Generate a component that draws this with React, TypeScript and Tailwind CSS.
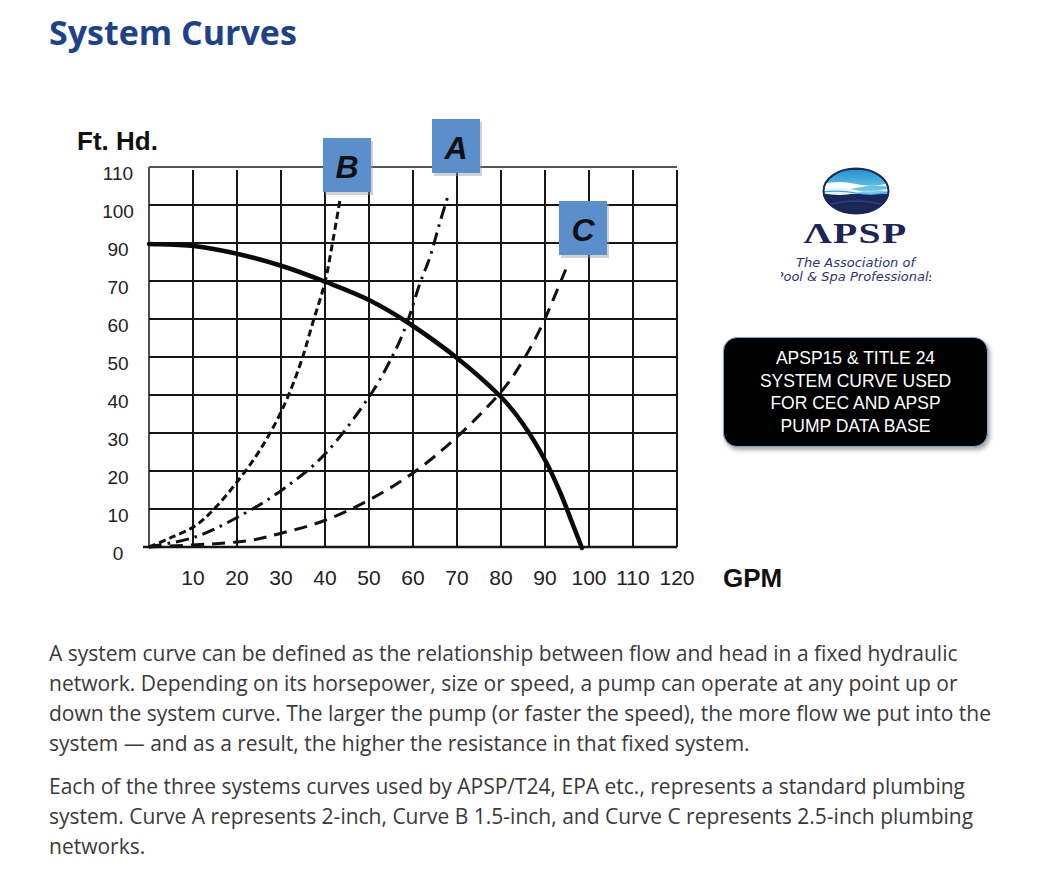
import React from "react";

type Pt = [number, number];

// grid in page coordinates (the svg viewBox is offset to match)
const GRID_X = Array.from({ length: 13 }, (_, i) => 149 + i * 44);
const GRID_Y = Array.from({ length: 11 }, (_, j) => 167 + j * 38);
const Y_LABELS = ["110", "100", "90", "70", "60", "50", "40", "30", "20", "10", "0"];
const X_LABELS = ["10", "20", "30", "40", "50", "60", "70", "80", "90", "100", "110", "120"];

const PUMP: Pt[] = [
	[149, 244], [194, 246], [238, 254], [282, 266], [326, 282], [369, 300],
	[410, 324], [457, 358], [500, 396], [523, 424], [545, 460], [560, 492],
	[573, 525], [582, 548],
];
const CURVE_B: Pt[] = [
	[149, 547], [170, 538], [195, 526], [215, 508], [237, 482], [260, 450],
	[282, 410], [300, 365], [313, 322], [325, 282], [333, 240], [340, 200],
];
const CURVE_A: Pt[] = [
	[149, 547], [195, 537], [238, 517], [282, 490], [326, 453], [369, 397],
	[393, 355], [407, 323], [420, 283], [430, 257], [440, 222], [448, 196],
];
const CURVE_C: Pt[] = [
	[149, 547], [237, 542], [282, 533], [326, 520], [369, 500], [413, 473],
	[457, 437], [500, 393], [522, 362], [543, 323], [568, 264],
];

// catmull-rom -> cubic bezier
function smooth(pts: Pt[]) {
	let d = `M${pts[0][0]} ${pts[0][1]}`;
	for (let i = 0; i < pts.length - 1; i++) {
		const p0 = pts[i - 1] || pts[i];
		const p1 = pts[i];
		const p2 = pts[i + 1];
		const p3 = pts[i + 2] || p2;
		const c1x = p1[0] + (p2[0] - p0[0]) / 6;
		const c1y = p1[1] + (p2[1] - p0[1]) / 6;
		const c2x = p2[0] - (p3[0] - p1[0]) / 6;
		const c2y = p2[1] - (p3[1] - p1[1]) / 6;
		d += ` C${c1x} ${c1y} ${c2x} ${c2y} ${p2[0]} ${p2[1]}`;
	}
	return d;
}

function CurveTag({ x, y, letter }: { x: number; y: number; letter: string }) {
	return (
		<g>
			<rect x={x + 2} y={y + 3} width={48} height={54} fill="#9a9a9a" opacity={0.45} />
			<rect x={x} y={y} width={48} height={54} fill="#5b8fcc" />
			<text
				x={x + 24}
				y={y + 40}
				textAnchor="middle"
				fontFamily="'Liberation Sans', Arial, sans-serif"
				fontWeight="bold"
				fontStyle="italic"
				fontSize="32"
				fill="#111"
			>
				{letter}
			</text>
		</g>
	);
}

function SystemChart() {
	const font = "'Liberation Sans', Arial, sans-serif";
	return (
		<svg
			width={650}
			height={480}
			viewBox="70 115 650 480"
			className="ml-[21px] shrink-0 overflow-visible"
		>
			<text x={77} y={150} fontFamily={font} fontWeight="bold" fontSize="26" fill="#111">
				Ft. Hd.
			</text>

			{/* grid */}
			{GRID_X.map((x, i) => (
				<line
					key={"v" + x}
					x1={x}
					y1={i === 0 ? 167 : 170}
					x2={x}
					y2={547}
					stroke={i === 0 ? "#4a4f5c" : "#161616"}
					strokeWidth={2}
				/>
			))}
			{GRID_Y.map((y, j) => (
				<line
					key={"h" + y}
					x1={j === 10 ? 143 : 149}
					y1={y}
					x2={677}
					y2={y}
					stroke={j === 0 ? "#555" : "#161616"}
					strokeWidth={j === 10 ? 2.6 : 2}
				/>
			))}

			{Y_LABELS.map((t, j) => (
				<text
					key={"yl" + t}
					x={118}
					y={GRID_Y[j] + 13}
					textAnchor="middle"
					fontFamily={font}
					fontSize="19"
					fill="#222"
				>
					{t}
				</text>
			))}
			{X_LABELS.map((t, i) => (
				<text
					key={"xl" + t}
					x={GRID_X[i + 1]}
					y={585}
					textAnchor="middle"
					fontFamily={font}
					fontSize="21"
					fill="#222"
				>
					{t}
				</text>
			))}
			<text x={723} y={587} fontFamily={font} fontWeight="bold" fontSize="26" fill="#111">
				GPM
			</text>

			{/* system curves */}
			<path d={smooth(CURVE_C)} fill="none" stroke="#111" strokeWidth={3} strokeDasharray="13 8" />
			<path d={smooth(CURVE_A)} fill="none" stroke="#111" strokeWidth={3} strokeDasharray="13 6 2.5 6" />
			<path d={smooth(CURVE_B)} fill="none" stroke="#111" strokeWidth={3} strokeDasharray="7 4" />
			{/* pump curve */}
			<path d={smooth(PUMP)} fill="none" stroke="#0a0a0a" strokeWidth={4.5} strokeLinecap="round" />

			<CurveTag x={323} y={138} letter="B" />
			<CurveTag x={432} y={119} letter="A" />
			<CurveTag x={559} y={201} letter="C" />
		</svg>
	);
}

function ApspLogo() {
	return (
		<svg width="68" height="48" viewBox="0 0 68 48" className="mt-[52px]">
			<defs>
				<clipPath id="apsp-oval">
					<ellipse cx="34" cy="24" rx="33" ry="23" />
				</clipPath>
				<linearGradient id="apsp-sky" x1="0" y1="0" x2="0" y2="1">
					<stop offset="0" stopColor="#1f94cf" />
					<stop offset="1" stopColor="#7fd0ee" />
				</linearGradient>
			</defs>
			<ellipse cx="34" cy="24" rx="33" ry="23" fill="#1b2759" />
			<g clipPath="url(#apsp-oval)">
				<rect x="0" y="3" width="68" height="24" fill="url(#apsp-sky)" />
				<path d="M0 17 Q17 13 34 17 T68 16 L68 20 Q51 17 34 21 T0 21 Z" fill="#fff" />
				<path d="M0 22 Q17 19 34 23 T68 21 L68 25 Q51 22 34 26 T0 26 Z" fill="#e8f6fc" />
				<path d="M0 25 Q17 23 34 26 T68 25" fill="none" stroke="#3aa6d8" strokeWidth="1.2" />
				<path d="M6 38 Q34 30 62 38" fill="none" stroke="#2f3f7a" strokeWidth="1.5" />
			</g>
			<ellipse cx="34" cy="24" rx="32.5" ry="22.5" fill="none" stroke="#1b2759" strokeWidth="2" />
		</svg>
	);
}

export default function App() {
	return (
		<div className="min-h-screen bg-white px-[49px] pt-[13px] font-['Open_Sans',sans-serif]">
			<h2 className="text-[34px] font-bold leading-[38px] text-[#1d428a]">System Curves</h2>

			{/* figure: chart + legend */}
			<div className="mt-[64px] flex">
				<SystemChart />
				<div className="ml-[3px] flex w-[265px] flex-col items-center">
					<ApspLogo />
					<div className="mt-[3px] scale-x-[1.32] font-['Liberation_Serif',serif] text-[30px] font-bold leading-[30px] tracking-[1px] text-[#1c2557]">
						ΛPSP
					</div>
					<div className="mt-[8px] flex w-[150px] flex-col items-center overflow-hidden font-['DejaVu_Sans',sans-serif] text-[13px] italic leading-[14px] text-[#2b3371]">
						<span className="whitespace-nowrap">The Association of</span>
						<span className="flex w-full justify-center whitespace-nowrap">
							<span>Pool &amp; Spa Professionals</span>
						</span>
					</div>
					<div className="mt-[53px] flex h-[110px] w-[265px] flex-col items-center justify-center rounded-[14px] border border-[#7ea6d2] bg-black text-center font-['Liberation_Sans',sans-serif] text-[17.5px] leading-[22.5px] text-white shadow-[2px_3px_4px_rgba(0,0,0,0.35)]">
						<span>APSP15 &amp; TITLE 24</span>
						<span>SYSTEM CURVE USED</span>
						<span>FOR CEC AND APSP</span>
						<span>PUMP DATA BASE</span>
					</div>
				</div>
			</div>

			<div className="mt-[43px] w-[955px] text-[21px] leading-[30px] text-[#3a3a3a]">
				<p className="mb-[13px]">
					A system curve can be defined as the relationship between flow and head in a fixed hydraulic
					network. Depending on its horsepower, size or speed, a pump can operate at any point up or
					down the system curve. The larger the pump (or faster the speed), the more flow we put into the
					system — and as a result, the higher the resistance in that fixed system.
				</p>
				<p>
					Each of the three systems curves used by APSP/T24, EPA etc., represents a standard plumbing
					system. Curve A represents 2-inch, Curve B 1.5-inch, and Curve C represents 2.5-inch plumbing
					networks.
				</p>
			</div>
		</div>
	);
}
